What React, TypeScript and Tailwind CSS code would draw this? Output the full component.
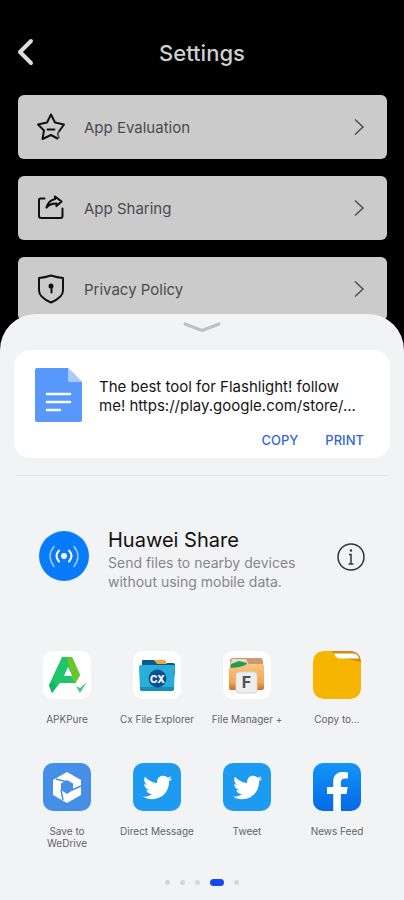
import type { ReactNode } from "react";
import { FaFacebookF, FaTwitter } from "react-icons/fa";

function StarIcon() {
  return (
    <svg viewBox="0 0 30 30" className="size-[30px]" fill="none" stroke="#111" strokeWidth="2" strokeLinejoin="round" strokeLinecap="round" aria-hidden="true">
      <path d="M23 19.500 28 12.500 19 10.500 15 2.500 11 10.500 2 12.500 8 18.500 6.500 27 15 23 21.500 26.500" />
      <path d="M11.500 17.500h7" strokeWidth="1.800" />
      <path d="M23 19.500 21.500 22l1.500 3.500" strokeWidth="1.500" stroke="#444" />
    </svg>
  );
}

function ShareIcon() {
  return (
    <svg viewBox="0 0 30 30" className="size-[30px]" fill="none" stroke="#111" strokeWidth="2" strokeLinejoin="round" strokeLinecap="round" aria-hidden="true">
      <path d="M8.500 5.500H4.500Q3 5.500 3 7V23q0 2 2 2h19.500q2 0 2-2v-7.500" />
      <path d="M10.500 14.500C12 9.500 14.500 7 19 6V3.500L25.500 8.500 20.500 13V10.500C16.500 10.500 13 11.500 10.500 14.500Z" strokeWidth="2.200" />
    </svg>
  );
}

function ShieldIcon() {
  return (
    <svg viewBox="0 0 30 30" className="size-[30px]" fill="none" stroke="#111" strokeWidth="2" strokeLinejoin="round" strokeLinecap="round" aria-hidden="true">
      <path d="M3 4Q9 3.500 15 1.500 21 3.500 27 4V16.500C27 22 22 25.500 15 28.500 8 25.500 3 22 3 16.500Z" />
      <circle cx="15" cy="12" r="1.500" fill="#111" />
      <path d="M15.500 12v6.500" />
    </svg>
  );
}

function SettingRow({ icon, label }: { icon: ReactNode; label: string }) {
  return (
    <button type="button" className="flex h-16 w-full items-center rounded-md bg-[#cbcbcb] pr-5 pl-[18px] text-left">
      {icon}
      <span className="ml-[18px] flex-1 pt-0.5 text-[15px] text-[#4b4b4b]">{label}</span>
      <svg viewBox="0 0 16 20" className="h-5 w-4" fill="none" stroke="#4d4d4d" strokeWidth="1.500" aria-hidden="true">
        <path d="M4 2.500 12 10 4 17.500" />
      </svg>
    </button>
  );
}

function ApkPureIcon() {
  return (
    <svg viewBox="0 0 48 48" className="size-12 shrink-0" aria-hidden="true">
      <rect width="48" height="48" rx="10" fill="#fff" />
      <path d="M19 6h10l8 18-5 8H17L9 42 6 34z" fill="#1fc46c" />
      <path d="M24 6h5l8 18-5 9-4-8h2.500L26 16z" fill="#6cc629" />
      <path d="M6 34 11 30 13 36 9 42z" fill="#12b563" />
      <path d="m25 16 4.500 9h-8.500z" fill="#fff" />
      <path d="m33 35 4 2 7-6-7 11z" fill="#43cf78" />
    </svg>
  );
}

function CxIcon() {
  return (
    <svg viewBox="0 0 48 48" className="size-12 shrink-0" aria-hidden="true">
      <rect width="48" height="48" rx="10" fill="#fff" />
      <path d="M9 10q0-1 1-1h11l4 3h15q2 0 2 2v10H9z" fill="#075a92" />
      <path d="M21 9h10q2 0 3 4H24z" fill="#f5a43b" />
      <path d="M6 16q0-2 2-2h32q2 0 2 2l-1 22q0 2-2 2H9q-2 0-2-2z" fill="#28aed7" />
      <path d="M7 36h34v2q0 2-2 2H9q-2 0-2-2z" fill="#168eb9" />
      <circle cx="24.500" cy="27.500" r="9" fill="#0d4e94" />
      <text x="24.500" y="31.500" textAnchor="middle" fontFamily="Inter, sans-serif" fontWeight="800" fontSize="10" fill="#fff">CX</text>
    </svg>
  );
}

function FileManagerIcon() {
  return (
    <svg viewBox="0 0 48 48" className="size-12 shrink-0" aria-hidden="true">
      <defs>
        <linearGradient id="fm-folder" x1="0" y1="0" x2="0" y2="1">
          <stop offset="0" stopColor="#f9c582" />
          <stop offset="0.700" stopColor="#f0a952" />
          <stop offset="1" stopColor="#cf6d24" />
        </linearGradient>
      </defs>
      <rect width="48" height="48" rx="10" fill="#fff" />
      <path d="M10 7h27q3 0 3 4v8H7V9q0-2 3-2z" fill="#cb9a68" />
      <path d="M9 8h14l3 6H7z" fill="#e3ddc8" />
      <path d="m8 13 8-3 8 2-1 4-15 1z" fill="#279a54" />
      <path d="M6 17q12 0 18-4h15q2 0 2 2v22q0 2-2 2H8q-2 0-2-2z" fill="url(#fm-folder)" />
      <rect x="13" y="21" width="21" height="21" rx="3" fill="#eeeeef" stroke="#d3d3d3" />
      <text x="23.500" y="37" textAnchor="middle" fontFamily="Inter, sans-serif" fontWeight="700" fontSize="16" fill="#505254">F</text>
    </svg>
  );
}

function CopyToIcon() {
  return (
    <svg viewBox="0 0 48 48" className="size-12 shrink-0 rounded-[10px]" aria-hidden="true">
      <rect width="48" height="48" rx="10" fill="#f6b500" />
      <path d="M19 0h19q9 0 10 9v2L22 5z" fill="#d98710" />
      <path d="M21 2.500h19q5 0 6 5H27q-4 0-6-5z" fill="#fff" />
    </svg>
  );
}

function WeDriveIcon() {
  return (
    <svg viewBox="0 0 48 48" className="size-12 shrink-0" aria-hidden="true">
      <rect width="48" height="48" rx="10" fill="#468fe7" />
      <path d="M24 9 38 17v15L24 40 10 32V17z" fill="#fff" />
      <path d="m24 17 6 3.500v6.500l-6 4-6-4v-6.500z" fill="#468fe7" />
      <path d="m13 16 11 3M38 23l-9 4M18 27l2 10" stroke="#468fe7" strokeWidth="1.500" fill="none" />
    </svg>
  );
}

function TwitterTile() {
  return (
    <span className="flex size-12 shrink-0 items-center justify-center rounded-[10px] bg-[#1d9bf0] text-white">
      <FaTwitter size={29} aria-hidden="true" />
    </span>
  );
}

function FacebookTile() {
  return (
    <span className="flex size-12 shrink-0 items-end justify-center overflow-hidden rounded-[10px] bg-linear-to-b from-[#1495f7] to-[#0869e5] text-white">
      <FaFacebookF size={39} aria-hidden="true" />
    </span>
  );
}

const apps: { name: string; icon: ReactNode }[] = [
  { name: "APKPure", icon: <ApkPureIcon /> },
  { name: "Cx File Explorer", icon: <CxIcon /> },
  { name: "File Manager +", icon: <FileManagerIcon /> },
  { name: "Copy to...", icon: <CopyToIcon /> },
  { name: "Save to WeDrive", icon: <WeDriveIcon /> },
  { name: "Direct Message", icon: <TwitterTile /> },
  { name: "Tweet", icon: <TwitterTile /> },
  { name: "News Feed", icon: <FacebookTile /> },
];

export default function App() {
  return (
    <div className="flex min-h-screen flex-col bg-black font-['Inter',sans-serif]">
      <header className="grid grid-cols-[1fr_auto_1fr] items-center px-4 pt-9 pb-[25px]">
        <button type="button" aria-label="Back" className="w-5">
          <svg viewBox="0 0 20 30" className="h-[30px] w-5" fill="none" stroke="#dedede" strokeWidth="4" strokeLinecap="round" strokeLinejoin="round" aria-hidden="true">
            <path d="M15 3 4 14 15 25" />
          </svg>
        </button>
        <h1 className="text-[22px] leading-[34px] font-medium text-[#cfcfcf]">Settings</h1>
      </header>

      <main className="flex flex-col gap-[17px] pr-[17px] pl-[18px]">
        <SettingRow icon={<StarIcon />} label="App Evaluation" />
        <SettingRow icon={<ShareIcon />} label="App Sharing" />
        <SettingRow icon={<ShieldIcon />} label="Privacy Policy" />
      </main>

      <section aria-label="Share" className="relative -mt-[7px] flex flex-1 flex-col rounded-t-[36px] bg-[#f2f3f5]">
        <button type="button" aria-label="Collapse" className="flex h-9 justify-center pt-1.5">
          <svg viewBox="0 0 42 14" className="h-3.5 w-[42px]" fill="none" stroke="#bfc0c2" strokeWidth="3" strokeLinecap="round" strokeLinejoin="round" aria-hidden="true">
            <path d="M4 4 21 10.500 38 4" />
          </svg>
        </button>

        <div className="mx-[14px] rounded-2xl bg-white pt-[18px] pr-4 pb-2 pl-[21px]">
          <div className="flex">
            <svg viewBox="0 0 48 54" className="h-[54px] w-12 shrink-0" aria-hidden="true">
              <path d="M2 0H33L47 14V52q0 2-2 2H2q-2 0-2-2V2Q0 0 2 0z" fill="#5798fa" />
              <path d="M33 0 47 14H35q-2 0-2-2z" fill="#a9cbfd" />
              <path d="M12 26h23M12 34h23M12 42h13" stroke="#fff" strokeWidth="2.500" strokeLinecap="round" />
            </svg>
            <p className="min-w-0 flex-1 pt-[9px] pl-4 text-[15px] leading-[19px] text-[#151515]">
              <span className="block">The best tool for Flashlight! follow</span>
              <span className="block">me! https://play.google.com/store/...</span>
            </p>
          </div>
          <div className="mt-2 flex justify-end gap-[27px] pr-2.5 text-[13px] leading-5 font-medium text-[#3465dd]">
            <button type="button">COPY</button>
            <button type="button">PRINT</button>
          </div>
        </div>

        <hr className="mx-4 mt-[17px] border-t border-[#e5e6e8]" />

        <div className="mt-[51px] flex items-start pr-[38px] pl-[39px]">
          <svg viewBox="0 0 50 50" className="mt-1 size-[50px] shrink-0" fill="none" stroke="#fff" strokeLinecap="round" aria-hidden="true">
            <circle cx="25" cy="25" r="25" fill="#087bfd" stroke="none" />
            <circle cx="25" cy="25" r="3" fill="#fff" stroke="none" />
            <path d="M20 19.500q-5 5.500 0 11M30 19.500q5 5.500 0 11" strokeWidth="2" />
            <path d="M15 15.500q-8 9.500 0 20M35 15.500q8 9.500 0 20" strokeWidth="1.500" opacity="0.600" />
          </svg>
          <div className="min-w-0 flex-1 pl-[19px]">
            <h2 className="text-xl leading-[26px] text-[#111]">Huawei Share</h2>
            <p className="text-sm leading-[19px] text-[#85868a]">
              <span className="block whitespace-nowrap">Send files to nearby devices</span>
              <span className="block whitespace-nowrap">without using mobile data.</span>
            </p>
          </div>
          <button type="button" aria-label="Information" className="mt-[15px] shrink-0">
            <svg viewBox="0 0 30 30" className="size-[30px]" fill="none" stroke="#333" strokeWidth="1.500" aria-hidden="true">
              <circle cx="15" cy="15" r="13" />
              <path d="M13 12.500h2V22M12.500 22h5" strokeWidth="1.500" />
              <circle cx="15" cy="8.500" r="1.200" fill="#333" stroke="none" />
            </svg>
          </button>
        </div>

        <div className="mt-[60px] grid grid-cols-4 items-start gap-y-[38px] px-[22px]">
          {apps.map((app) => (
            <button key={app.name} type="button" className="flex flex-col items-center">
              {app.icon}
              <span className="mt-[14px] max-w-20 text-[10px] leading-3 text-[#626367]">
                {app.name === "Save to WeDrive" ? <>Save to<br />WeDrive</> : app.name}
              </span>
            </button>
          ))}
        </div>

        <div className="mt-auto flex items-center justify-center gap-2.5 pt-5 pb-[14px]">
          <span className="size-[5px] rounded-full bg-[#d5d6d9]" />
          <span className="size-[5px] rounded-full bg-[#d5d6d9]" />
          <span className="size-[5px] rounded-full bg-[#d5d6d9]" />
          <span className="h-[7px] w-[14px] rounded-full bg-[#144be6]" />
          <span className="size-[5px] rounded-full bg-[#d5d6d9]" />
        </div>
      </section>
    </div>
  );
}
